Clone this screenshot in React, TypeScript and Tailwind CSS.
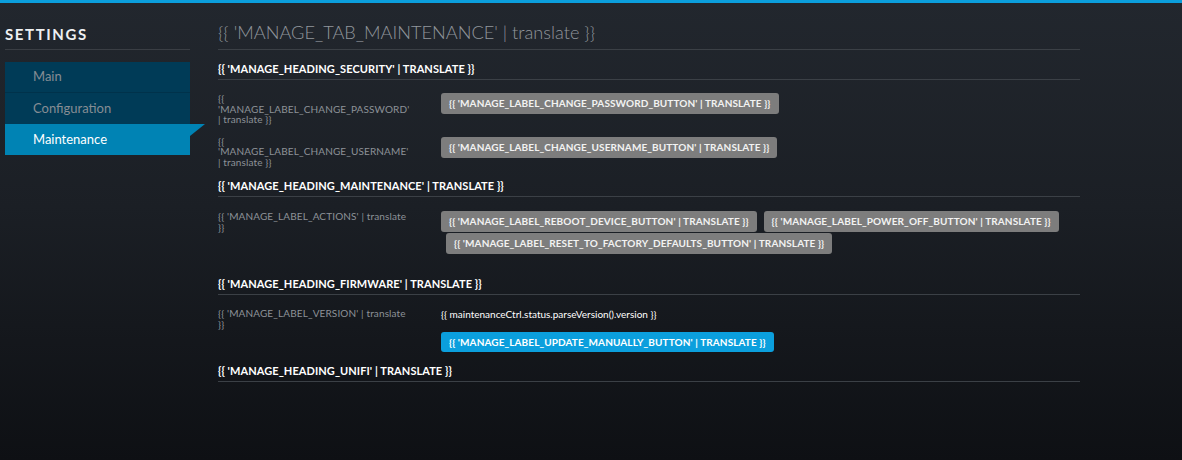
import React from "react";

const font = { fontFamily: "Lato, 'Open Sans', sans-serif" };

function GrayBtn({ children, className = "" }: { children: React.ReactNode; className?: string }) {
  return (
    <div
      className={`h-[21px] px-[8px] rounded-[3px] bg-[#7d7d7d] text-[#f2f2f2] text-[10px] font-bold uppercase tracking-[0.1px] flex items-center whitespace-nowrap ${className}`}
    >
      {children}
    </div>
  );
}

function Heading({ children, className = "" }: { children: React.ReactNode; className?: string }) {
  return (
    <div className={`border-b border-[#3b4046] pb-[3px] ${className}`}>
      <div className="text-[11px] leading-[14px] font-bold uppercase text-white tracking-[0.07px] whitespace-nowrap">
        {children}
      </div>
    </div>
  );
}

function Label({ children }: { children: React.ReactNode }) {
  return (
    <div className="w-[193px] mr-[30px] shrink-0 text-[10px] leading-[10.5px] tracking-[0.13px] text-[#8d9298] whitespace-nowrap">
      {children}
    </div>
  );
}

export default function App() {
  return (
    <div
      className="w-[1182px] h-[460px] overflow-hidden bg-[linear-gradient(to_bottom,#22272e_0%,#1b1f25_45%,#0e1014_100%)]"
      style={font}
    >
      <div className="h-[3px] bg-[#0b9fdd]" />
      <div className="flex">
        {/* Sidebar */}
        <div className="w-[185px] ml-[5px] shrink-0">
          <div className="mt-[22px] h-[25px] border-b border-[#3a3e44] text-[15px] leading-[18px] font-bold tracking-[1.6px] text-[#eef0f2]">
            SETTINGS
          </div>
          <div className="mt-[12px]">
            <div className="h-[31px] bg-[#003b57] border-b border-[#00324b] pl-[28px] flex items-center text-[13px] text-[#868d94]">
              Main
            </div>
            <div className="h-[31px] bg-[#003b57] pl-[28px] flex items-center text-[13px] text-[#868d94]">
              Configuration
            </div>
            <div className="relative h-[31px] bg-[#0083b4] pl-[28px] flex items-center text-[13px] text-white">
              Maintenance
              <svg className="absolute left-full top-0" width="15" height="12" viewBox="0 0 15 12">
                <polygon points="0,0 15,0 0,12" fill="#0083b4" />
              </svg>
            </div>
          </div>
        </div>

        {/* Main */}
        <div className="ml-[28px] w-[862px] shrink-0">
          <div className="mt-[18px] pb-[6px] border-b border-[#3b4046]">
            <div className="text-[18.2px] leading-[22px] font-light text-[#91969c] whitespace-nowrap">
              {"{{ 'MANAGE_TAB_MAINTENANCE' | translate }}"}
            </div>
          </div>

          <Heading className="mt-[12px]">{"{{ 'MANAGE_HEADING_SECURITY' | TRANSLATE }}"}</Heading>

          <div className="flex mt-[13px]">
            <Label>
              {"{{"}
              <br />
              {"'MANAGE_LABEL_CHANGE_PASSWORD'"}
              <br />
              {"| translate }}"}
            </Label>
            <GrayBtn>{"{{ 'MANAGE_LABEL_CHANGE_PASSWORD_BUTTON' | TRANSLATE }}"}</GrayBtn>
          </div>

          <div className="flex mt-[11px]">
            <Label>
              {"{{"}
              <br />
              {"'MANAGE_LABEL_CHANGE_USERNAME'"}
              <br />
              {"| translate }}"}
            </Label>
            <GrayBtn className="mt-[1px]">{"{{ 'MANAGE_LABEL_CHANGE_USERNAME_BUTTON' | TRANSLATE }}"}</GrayBtn>
          </div>

          <Heading className="mt-[12px]">{"{{ 'MANAGE_HEADING_MAINTENANCE' | TRANSLATE }}"}</Heading>

          <div className="flex mt-[14px]">
            <Label>
              {"{{ 'MANAGE_LABEL_ACTIONS' | translate"}
              <br />
              {"}}"}
            </Label>
            <div className="flex flex-wrap w-[630px] gap-y-[1px]">
              <GrayBtn>{"{{ 'MANAGE_LABEL_REBOOT_DEVICE_BUTTON' | TRANSLATE }}"}</GrayBtn>
              <GrayBtn className="ml-[7px]">{"{{ 'MANAGE_LABEL_POWER_OFF_BUTTON' | TRANSLATE }}"}</GrayBtn>
              <GrayBtn className="ml-[5px]">
                {"{{ 'MANAGE_LABEL_RESET_TO_FACTORY_DEFAULTS_BUTTON' | TRANSLATE }}"}
              </GrayBtn>
            </div>
          </div>

          <Heading className="mt-[23px]">{"{{ 'MANAGE_HEADING_FIRMWARE' | TRANSLATE }}"}</Heading>

          <div className="flex mt-[13px]">
            <Label>
              {"{{ 'MANAGE_LABEL_VERSION' | translate"}
              <br />
              {"}}"}
            </Label>
            <div className="flex flex-col items-start">
              <div className="text-[10px] leading-[12px] text-white whitespace-nowrap">
                {"{{ maintenanceCtrl.status.parseVersion().version }}"}
              </div>
              <div className="mt-[12px] h-[20px] px-[8px] rounded-[3px] bg-[#0b9fdd] text-white text-[10px] font-bold uppercase tracking-[0.1px] flex items-center whitespace-nowrap">
                {"{{ 'MANAGE_LABEL_UPDATE_MANUALLY_BUTTON' | TRANSLATE }}"}
              </div>
            </div>
          </div>

          <Heading className="mt-[12px]">{"{{ 'MANAGE_HEADING_UNIFI' | TRANSLATE }}"}</Heading>
        </div>
      </div>
    </div>
  );
}
